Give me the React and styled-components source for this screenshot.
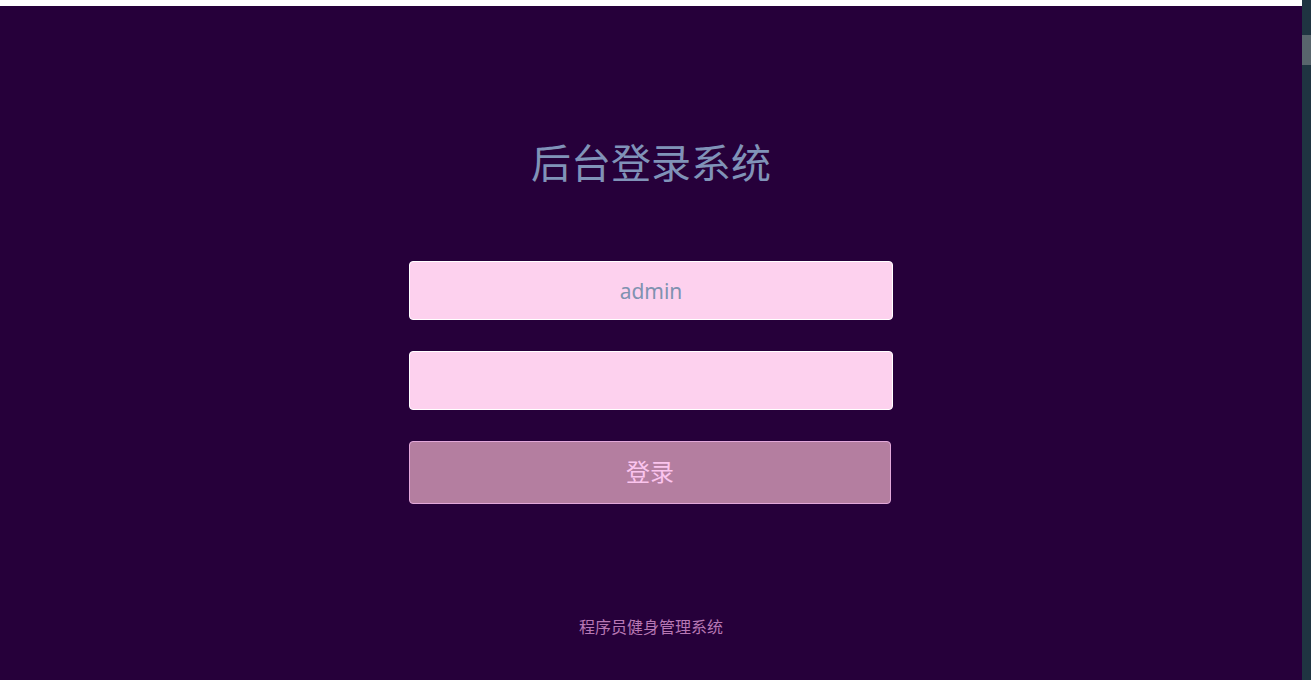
import React from "react"
import styled, { createGlobalStyle } from "styled-components"

const GlobalStyle = createGlobalStyle`
  html, body {
    margin: 0;
    padding: 0;
    height: 100%;
    overflow: hidden;
  }
  body {
    background: #26003a;
    font-family: "Noto Sans CJK SC", "Noto Sans", sans-serif;
  }
`

const Frame = styled.div`
  display: flex;
  height: 680px;
  width: 1311px;
`

const Main = styled.div`
  flex: 1;
  display: flex;
  flex-direction: column;
  background: #26003a;
`

const TopBar = styled.div`
  height: 6px;
  background: #ffffff;
`

const ScrollTrack = styled.div`
  width: 9px;
  background: #1f3441;
  padding-top: 35px;
`

const ScrollThumb = styled.div`
  height: 30px;
  background: #58656c;
`

const Title = styled.h1`
  margin: 131px 0 0;
  text-align: center;
  font-size: 40px;
  line-height: 48px;
  font-weight: 400;
  color: #8093b8;
`

const Form = styled.form`
  margin: 76px auto 0;
  width: 484px;
  display: flex;
  flex-direction: column;
  gap: 31px;
`

const Field = styled.input`
  box-sizing: border-box;
  width: 484px;
  height: 59px;
  border: 1px solid #ffffff;
  border-radius: 4px;
  background: #fdd1ee;
  text-align: center;
  font-family: "Noto Sans", "Noto Sans CJK SC", sans-serif;
  font-size: 21px;
  color: #7f92b0;
  outline: none;
`

const Submit = styled.button`
  box-sizing: border-box;
  width: 482px;
  height: 63px;
  padding: 0 0 4px;
  border: 1px solid #e3a8da;
  border-radius: 4px;
  background: #b47ea0;
  color: #fbc4ee;
  font-family: "Noto Sans CJK SC", sans-serif;
  font-size: 24px;
  cursor: pointer;
`

const Footer = styled.p`
  margin: 112px 0 0;
  text-align: center;
  font-size: 16px;
  line-height: 20px;
  color: #b878b4;
`

export default function App() {
  return (
    <>
      <GlobalStyle />
      <Frame>
        <Main>
          <TopBar />
          <Title>后台登录系统</Title>
          <Form onSubmit={e => e.preventDefault()}>
            <Field type="text" defaultValue="admin" />
            <Field type="password" />
            <Submit type="submit">登录</Submit>
          </Form>
          <Footer>程序员健身管理系统</Footer>
        </Main>
        <ScrollTrack>
          <ScrollThumb />
        </ScrollTrack>
      </Frame>
    </>
  )
}
